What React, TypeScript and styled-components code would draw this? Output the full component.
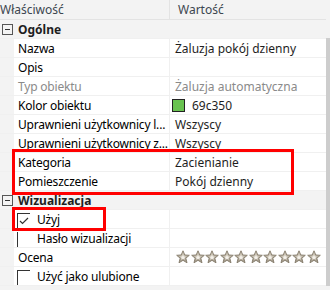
import React from 'react'
import styled, { createGlobalStyle } from 'styled-components'

const GlobalStyle = createGlobalStyle`
  html, body {
    margin: 0;
    padding: 0;
    background: #ffffff;
  }
  body {
    font-family: 'Noto Sans', 'Open Sans', sans-serif;
    font-size: 12px;
  }
`

const Frame = styled.div`
  position: relative;
  width: 330px;
  height: 290px;
  display: flex;
  overflow: hidden;
  background: #f3f3f3;
`

const Main = styled.div`
  width: 326px;
  display: flex;
  flex-direction: column;
`

const ScrollTrack = styled.div`
  width: 4px;
  display: flex;
  flex-direction: column;
  padding-top: 38px;
  padding-bottom: 4px;
`

const ScrollThumb = styled.div`
  flex: 1;
  background: #cdcdcd;
`

const Header = styled.div`
  height: 20px;
  display: flex;
  align-items: center;
  background: #f3f3f3;
  border-bottom: 1px solid #e3e3e3;
  box-sizing: border-box;
  color: #3c4650;
`

const HeadCell = styled.div<{ $w?: number }>`
  ${(p) => (p.$w ? `width: ${p.$w}px;` : 'flex: 1;')}
  height: 100%;
  display: flex;
  align-items: center;
  box-sizing: border-box;
  padding-left: ${(p) => (p.$w ? 0 : 8)}px;
  border-right: ${(p) => (p.$w ? '1px solid #e3e3e3' : 'none')};
`

const Row = styled.div<{ $category?: boolean }>`
  height: 19px;
  display: flex;
  box-sizing: border-box;
  background: ${(p) => (p.$category ? '#f3f3f3' : '#ffffff')};
  border-bottom: 1px solid #f0f0f0;
`

const Gutter = styled.div`
  width: 14px;
  flex: none;
  background: #f3f3f3;
  display: flex;
  align-items: center;
  justify-content: center;
`

const Toggle = styled.div`
  width: 9px;
  height: 9px;
  border: 1px solid #555;
  position: relative;
  margin-left: 1px;
  &::after {
    content: '';
    position: absolute;
    left: 2px;
    right: 2px;
    top: 4px;
    height: 1px;
    background: #333;
  }
`

const NameCell = styled.div<{ $muted?: boolean }>`
  width: 156px;
  flex: none;
  box-sizing: border-box;
  display: flex;
  align-items: center;
  padding-left: 4px;
  border-right: 1px solid #f0f0f0;
  white-space: nowrap;
  overflow: hidden;
  letter-spacing: -0.2px;
  color: ${(p) => (p.$muted ? '#8a8a8a' : '#000000')};
`

const CategoryName = styled.div`
  display: flex;
  align-items: center;
  padding-left: 4px;
  font-weight: 700;
  color: #1e1e1e;
`

const ValueCell = styled.div<{ $muted?: boolean }>`
  flex: 1;
  display: flex;
  align-items: center;
  gap: 7px;
  padding-left: 5px;
  white-space: nowrap;
  overflow: hidden;
  color: ${(p) => (p.$muted ? '#8a8a8a' : '#1e1e1e')};
`

const Swatch = styled.div<{ $color: string }>`
  width: 13px;
  height: 13px;
  box-sizing: border-box;
  border: 1px solid #222;
  background: ${(p) => p.$color};
  margin-left: -3px;
`

const Check = styled.div<{ $top?: boolean }>`
  width: 13px;
  height: 15px;
  margin-top: 3px;
  align-self: flex-start;
  box-sizing: border-box;
  border-left: 1px solid #333;
  border-top: ${(p) => (p.$top ? '1px solid #333' : 'none')};
  margin-right: 7px;
  margin-left: -1px;
  display: flex;
  align-items: center;
  justify-content: center;
`

const Filler = styled.div`
  flex: 1;
  background: #f3f3f3;
`

const Stars = styled.div`
  display: flex;
  gap: 0.5px;
  margin-left: 1px;
`

const Highlight = styled.div<{ $x: number; $y: number; $w: number; $h: number }>`
  position: absolute;
  left: ${(p) => p.$x}px;
  top: ${(p) => p.$y}px;
  width: ${(p) => p.$w}px;
  height: ${(p) => p.$h}px;
  box-sizing: border-box;
  border: 3px solid #ff0000;
  pointer-events: none;
`

const Star = () => (
  <svg width="14" height="14" viewBox="0 0 14 14">
    <defs>
      <linearGradient id="sg" x1="0" y1="0" x2="0" y2="1">
        <stop offset="0" stopColor="#d9d2c3" />
        <stop offset="1" stopColor="#9b9282" />
      </linearGradient>
    </defs>
    <polygon
      points="7,0.8 8.8,5 13.3,5.3 9.8,8.2 11,12.8 7,10.3 3,12.8 4.2,8.2 0.7,5.3 5.2,5"
      fill="url(#sg)"
      stroke="#8a8171"
      strokeWidth="1"
      strokeLinejoin="round"
    />
    <polygon points="7,4.6 7.9,6.4 9.8,6.6 8.4,7.9 8.8,9.8 7,8.8 5.2,9.8 5.6,7.9 4.2,6.6 6.1,6.4" fill="#f4f1ea" />
  </svg>
)

const Tick = () => (
  <svg width="10" height="8" viewBox="0 0 10 8">
    <polyline points="1,4 3.5,6.5 9,1" fill="none" stroke="#333" strokeWidth="1.2" />
  </svg>
)

type Prop = {
  name: string
  value?: React.ReactNode
  muted?: boolean
}

const general: Prop[] = [
  { name: 'Nazwa', value: 'Żaluzja pokój dzienny' },
  { name: 'Opis', value: '' },
  { name: 'Typ obiektu', value: 'Żaluzja automatyczna', muted: true },
  {
    name: 'Kolor obiektu',
    value: (
      <>
        <Swatch $color="#69c350" />
        69c350
      </>
    ),
  },
  { name: 'Uprawnieni użytkownicy l...', value: 'Wszyscy' },
  { name: 'Uprawnieni użytkownicy z...', value: 'Wszyscy' },
  { name: 'Kategoria', value: 'Zacienianie' },
  { name: 'Pomieszczenie', value: 'Pokój dzienny' },
]

const App: React.FC = () => {
  return (
    <>
      <GlobalStyle />
      <Frame>
        <Main>
          <Header>
            <HeadCell $w={170}>Właściwość</HeadCell>
            <HeadCell>Wartość</HeadCell>
          </Header>

          <Row $category>
            <Gutter>
              <Toggle />
            </Gutter>
            <CategoryName>Ogólne</CategoryName>
          </Row>
          {general.map((p) => (
            <Row key={p.name}>
              <Gutter />
              <NameCell $muted={p.muted}>{p.name}</NameCell>
              <ValueCell $muted={p.muted}>{p.value}</ValueCell>
            </Row>
          ))}

          <Row $category>
            <Gutter>
              <Toggle />
            </Gutter>
            <CategoryName>Wizualizacja</CategoryName>
          </Row>
          <Row>
            <Gutter />
            <NameCell>
              <Check $top>
                <Tick />
              </Check>
              Użyj
            </NameCell>
            <ValueCell />
          </Row>
          <Row>
            <Gutter />
            <NameCell>
              <Check />
              Hasło wizualizacji
            </NameCell>
            <ValueCell />
          </Row>
          <Row>
            <Gutter />
            <NameCell>Ocena</NameCell>
            <ValueCell>
              <Stars>
                {Array.from({ length: 10 }).map((_, i) => (
                  <Star key={i} />
                ))}
              </Stars>
            </ValueCell>
          </Row>
          <Row>
            <Gutter />
            <NameCell>
              <Check $top />
              Użyć jako ulubione
            </NameCell>
            <ValueCell />
          </Row>
          <Filler />
        </Main>
        <ScrollTrack>
          <ScrollThumb />
        </ScrollTrack>

        <Highlight $x={12} $y={149} $w={282} $h={46} />
        <Highlight $x={12} $y={207} $w={94} $h={24} />
      </Frame>
    </>
  )
}

export default App
